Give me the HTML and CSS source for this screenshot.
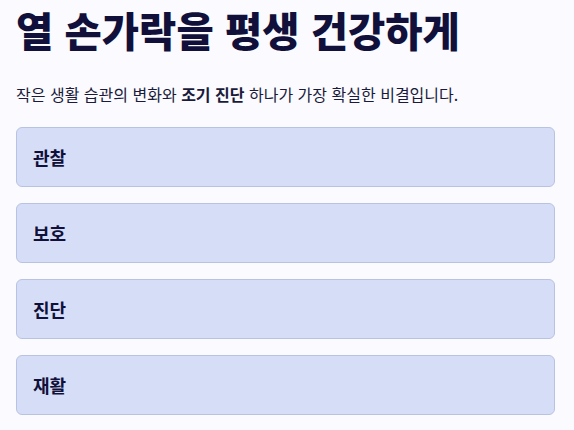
FILE: index.html
```html
<!DOCTYPE html>
<html lang="ko">
<head>
  <meta charset="UTF-8">
  <title>열 손가락을 평생 건강하게</title>
  <link rel="stylesheet" href="styles.css">
</head>
<body>

<main class="page">
  <h1 class="title">열 손가락을 평생 건강하게</h1>
  <p class="lead">작은 생활 습관의 변화와 <strong>조기 진단</strong> 하나가 가장 확실한 비결입니다.</p>

  <div class="steps">
    <div class="step">관찰</div>
    <div class="step">보호</div>
    <div class="step">진단</div>
    <div class="step">재활</div>
  </div>
</main>

</body>
</html>
```

FILE: styles.css
```css
body {
  margin: 0;
  background: #fafaff;
  color: #1a1a3a;
  font-family: "Noto Sans CJK KR", "Noto Sans", sans-serif;
}
.page {
  padding: 6px 16px;
}
.title {
  margin: 0;
  font-size: 40.5px;
  font-weight: 800;
  line-height: 1.18;
  color: #10103a;
}
.lead {
  margin: 28px 0 20px;
  font-size: 16px;
  line-height: 1.6;
}
.lead strong {
  font-weight: 700;
}
.steps {
  display: flex;
  flex-direction: column;
  gap: 16px;
  width: 539px;
}
.step {
  height: 58px;
  display: flex;
  align-items: center;
  padding: 0 16px;
  background: #d6def7;
  border: 1px solid #b8c3e3;
  border-radius: 6px;
  font-size: 18px;
  font-weight: 700;
  color: #10103a;
}
```
